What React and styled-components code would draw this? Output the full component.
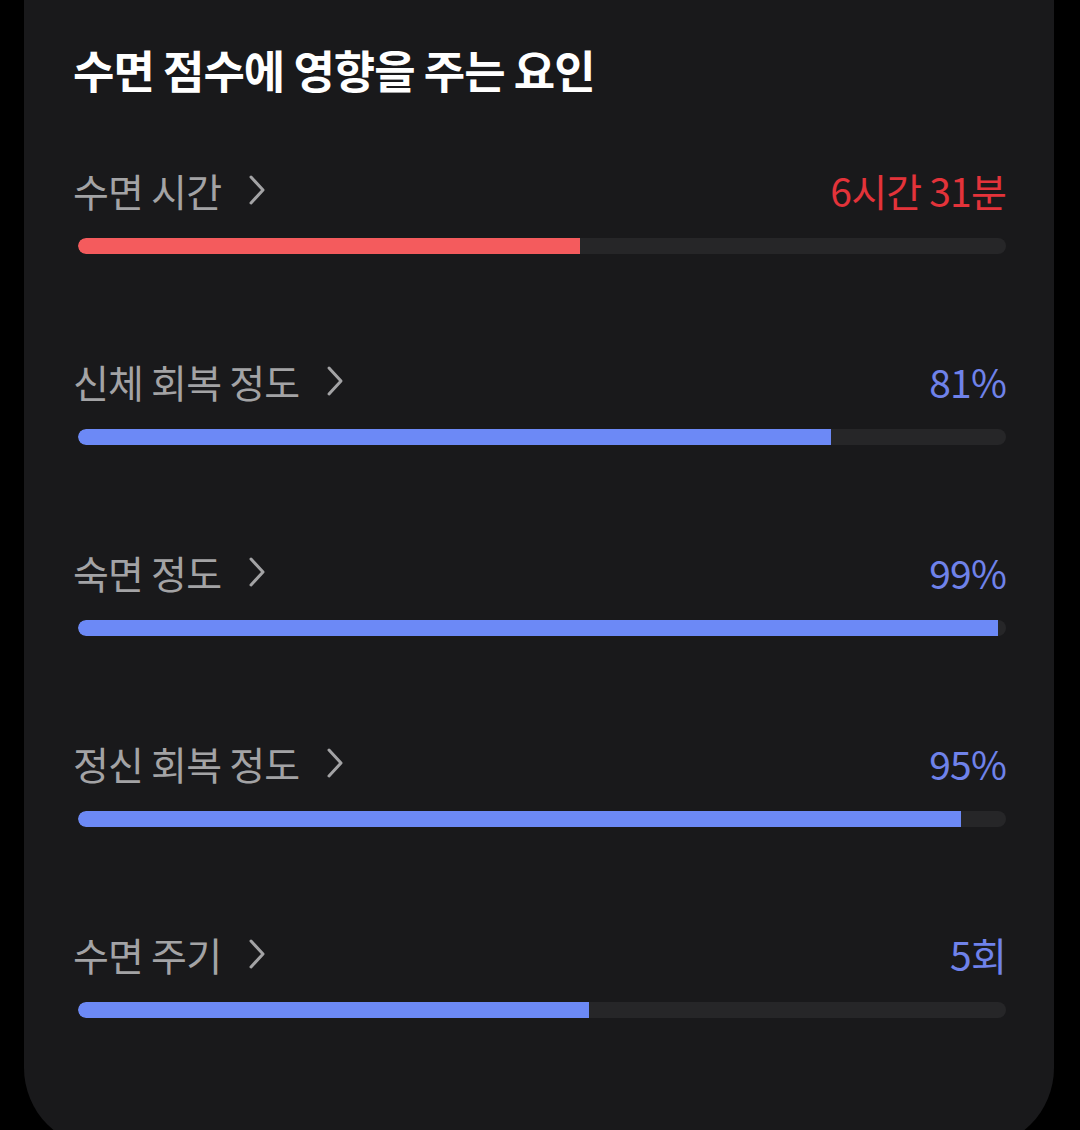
import React from 'react';
import styled, { createGlobalStyle } from 'styled-components';

const GlobalStyle = createGlobalStyle`
  body {
    margin: 0;
    background: #000;
    font-family: 'Noto Sans CJK KR', 'Noto Sans', sans-serif;
  }
`;

const Card = styled.div`
  margin: 0 26px 0 24px;
  padding: 42px 48px 130px 49px;
  background-color: #19191b;
  border-radius: 0 0 80px 80px;
`;

const Title = styled.h2`
  margin: 0 0 68px 0;
  height: 56px;
  line-height: 56px;
  font-size: 45px;
  font-weight: 700;
  letter-spacing: -1px;
  color: #ffffff;
`;

const Row = styled.div`
  margin-bottom: 103px;

  &:last-child {
    margin-bottom: 0;
  }
`;

const RowHead = styled.div`
  display: flex;
  justify-content: space-between;
  align-items: center;
  height: 48px;
`;

const Label = styled.div`
  display: flex;
  align-items: center;
  gap: 26px;
  font-size: 39px;
  font-weight: 400;
  letter-spacing: -0.8px;
  color: #a3a3a5;
`;

const Value = styled.div`
  font-size: 39px;
  font-weight: 400;
  letter-spacing: -0.8px;
  color: ${(props) => (props.alert ? '#e3333a' : '#6f82ea')};
`;

const Track = styled.div`
  margin: 24px 0 0 5px;
  height: 16px;
  border-radius: 8px;
  background-color: #262628;
  overflow: hidden;
`;

const Fill = styled.div`
  height: 100%;
  background-color: ${(props) => (props.alert ? '#f45b5d' : '#6c89f6')};
  border-radius: 8px 0 0 8px;
`;

const Chevron = () => (
  <svg width="20" height="32" viewBox="0 0 20 32" fill="none">
    <polyline points="4,3 16,16 4,29" stroke="#a3a3a5" strokeWidth="3" strokeLinecap="round" strokeLinejoin="round" />
  </svg>
);

const factors = [
  { name: '수면 시간', value: '6시간 31분', pct: 54.1, alert: true },
  { name: '신체 회복 정도', value: '81%', pct: 81.1 },
  { name: '숙면 정도', value: '99%', pct: 99.1 },
  { name: '정신 회복 정도', value: '95%', pct: 95.1 },
  { name: '수면 주기', value: '5회', pct: 55.1 },
];

const App = () => {
  return (
    <>
      <GlobalStyle />
      <Card>
        <Title>수면 점수에 영향을 주는 요인</Title>
        {factors.map((f) => (
          <Row key={f.name}>
            <RowHead>
              <Label>
                {f.name}
                <Chevron />
              </Label>
              <Value alert={f.alert}>{f.value}</Value>
            </RowHead>
            <Track>
              <Fill alert={f.alert} style={{ width: `${f.pct}%` }} />
            </Track>
          </Row>
        ))}
      </Card>
    </>
  );
};

export default App;
